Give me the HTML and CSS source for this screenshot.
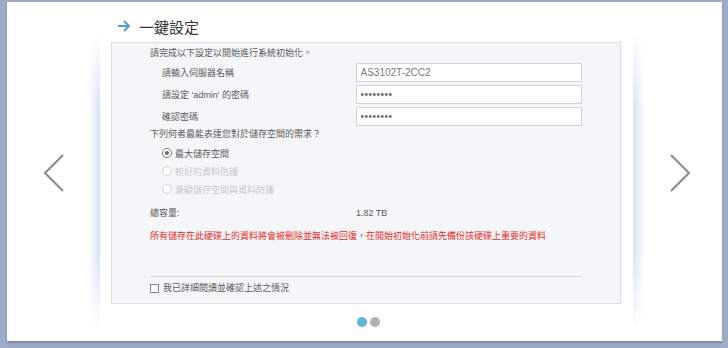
FILE: index.html
```html
<!DOCTYPE html>
<html lang="zh-Hant">
  <head>
    <meta charset="UTF-8" />
    <meta name="viewport" content="width=device-width, initial-scale=1.0" />
    <title>一鍵設定</title>
    <link rel="stylesheet" href="styles.css">
  </head>
  <body>
    <div class="window">
      <div class="nav left">
        <svg width="22" height="38" viewBox="0 0 22 38"><polyline points="20,1 2,19 20,37" fill="none" stroke="#8a8a8a" stroke-width="2" /></svg>
      </div>
      <div class="slide">
        <h2 class="title">
          <svg class="arrow" width="14" height="12" viewBox="0 0 14 12"><path d="M1 6 H12 M7 1 L12 6 L7 11" fill="none" stroke="#5b9bd5" stroke-width="2" /></svg>
          一鍵設定
        </h2>
        <div class="box">
          <p class="line intro">請完成以下設定以開始進行系統初始化。</p>
          <div class="form">
            <label class="row">
              <span class="label">請輸入伺服器名稱</span>
              <input class="field" type="text" value="AS3102T-2CC2" />
            </label>
            <label class="row">
              <span class="label">請設定 'admin' 的密碼</span>
              <input class="field" type="password" value="12345678" />
            </label>
            <label class="row">
              <span class="label">確認密碼</span>
              <input class="field" type="password" value="12345678" />
            </label>
          </div>
          <p class="line question">下列何者最能表達您對於儲存空間的需求？</p>
          <div class="options">
            <div class="option"><span class="radio checked"></span>最大儲存空間</div>
            <div class="option disabled"><span class="radio"></span>較好的資料防護</div>
            <div class="option disabled"><span class="radio"></span>兼顧儲存空間與資料防護</div>
          </div>
          <div class="line capacity">
            <span class="cap-label">總容量:</span>
            <span>1.82 TB</span>
          </div>
          <p class="line warning">所有儲存在此硬碟上的資料將會被刪除並無法被回復，在開始初始化前請先備份該硬碟上重要的資料</p>
          <div class="divider"></div>
          <div class="line confirm"><span class="checkbox"></span>我已詳細閱讀並確認上述之情況</div>
        </div>
        <div class="dots">
          <span class="dot active"></span>
          <span class="dot"></span>
        </div>
      </div>
      <div class="nav right">
        <svg width="22" height="38" viewBox="0 0 22 38"><polyline points="2,1 20,19 2,37" fill="none" stroke="#8a8a8a" stroke-width="2" /></svg>
      </div>
    </div>
  </body>
</html>
```

FILE: styles.css
```css
body {
  margin: 0;
  padding: 2px 6px 7px 7px;
  background-color: #9dacc7;
  font-family: "Liberation Sans", "Noto Sans CJK TC", sans-serif;
  color: #5a5a5a;
}

.window {
  display: flex;
  height: 339px;
  background: white;
  box-shadow: 0 2px 2px rgba(60, 70, 90, 0.35);
}

.nav {
  display: flex;
  align-items: center;
  justify-content: center;
  padding-top: 2px;
}

.nav.left {
  width: 93px;
  padding-left: 1px;
  box-sizing: border-box;
}

.nav.right {
  flex: 1;
  padding-left: 4px;
}

.slide {
  position: relative;
  width: 510px;
  padding: 14px 12px 0 11px;
  background: white;
}

.slide::before,
.slide::after {
  content: "";
  position: absolute;
  top: 30px;
  bottom: 10px;
  width: 12px;
  -webkit-mask-image: linear-gradient(to bottom, transparent, black 25%, black 75%, transparent);
  mask-image: linear-gradient(to bottom, transparent, black 25%, black 75%, transparent);
}

.slide::before {
  left: -12px;
  background: linear-gradient(to right, rgba(225, 230, 242, 0), rgba(215, 222, 240, 0.9));
}

.slide::after {
  right: -12px;
  background: linear-gradient(to left, rgba(225, 230, 242, 0), rgba(215, 222, 240, 0.9));
}

.title {
  display: flex;
  align-items: center;
  gap: 8px;
  height: 20px;
  margin: 0 0 6px 0;
  padding-left: 6px;
  font-size: 15px;
  font-weight: normal;
  color: #333;
}

.box {
  box-sizing: border-box;
  height: 262px;
  padding: 4px 38px 0 38px;
  background: #f5f6f8;
  border: 1px solid #dcdee2;
  font-size: 9px;
}

.line {
  margin: 0;
  height: 12px;
  line-height: 12px;
}

.form {
  display: flex;
  flex-direction: column;
  gap: 3px;
  margin-top: 4px;
}

.row {
  display: flex;
  align-items: center;
  height: 19px;
}

.label {
  width: 194px;
  padding-left: 12px;
}

.field {
  box-sizing: border-box;
  width: 227px;
  height: 19px;
  margin: 0;
  padding: 0 4px;
  border: 1px solid #d3d4d7;
  background: white;
  font-family: "Liberation Sans", sans-serif;
  font-size: 10px;
  color: #7a7a7a;
  outline: none;
}

.field[type="password"] {
  color: #666;
  letter-spacing: 0.5px;
}

.question {
  margin-top: 2px;
}

.options {
  margin-top: 4px;
}

.option {
  display: flex;
  align-items: center;
  gap: 3px;
  height: 18px;
  padding-left: 12px;
}

.option.disabled {
  color: #c9cacc;
}

.radio {
  box-sizing: border-box;
  width: 10px;
  height: 10px;
  border: 1px solid #777;
  border-radius: 50%;
  background: white;
  position: relative;
}

.option.disabled .radio {
  border-color: #d2d3d5;
}

.radio.checked::after {
  content: "";
  position: absolute;
  left: 2px;
  top: 2px;
  width: 4px;
  height: 4px;
  border-radius: 50%;
  background: #666;
}

.capacity {
  display: flex;
  margin-top: 9px;
}

.cap-label {
  width: 206px;
}

.warning {
  margin-top: 11px;
  color: #e8282a;
}

.divider {
  margin-top: 34px;
  border-top: 1px solid #d4d6d9;
}

.confirm {
  display: flex;
  align-items: center;
  gap: 4px;
  margin-top: 5px;
}

.checkbox {
  box-sizing: border-box;
  width: 9px;
  height: 9px;
  border: 1px solid #888;
  background: white;
}

.dots {
  display: flex;
  justify-content: center;
  gap: 3px;
  margin-top: 13px;
  padding-left: 4px;
}

.dot {
  width: 10px;
  height: 10px;
  border-radius: 50%;
  background: #b2b2b2;
}

.dot.active {
  background: #5cb8d8;
}
```
